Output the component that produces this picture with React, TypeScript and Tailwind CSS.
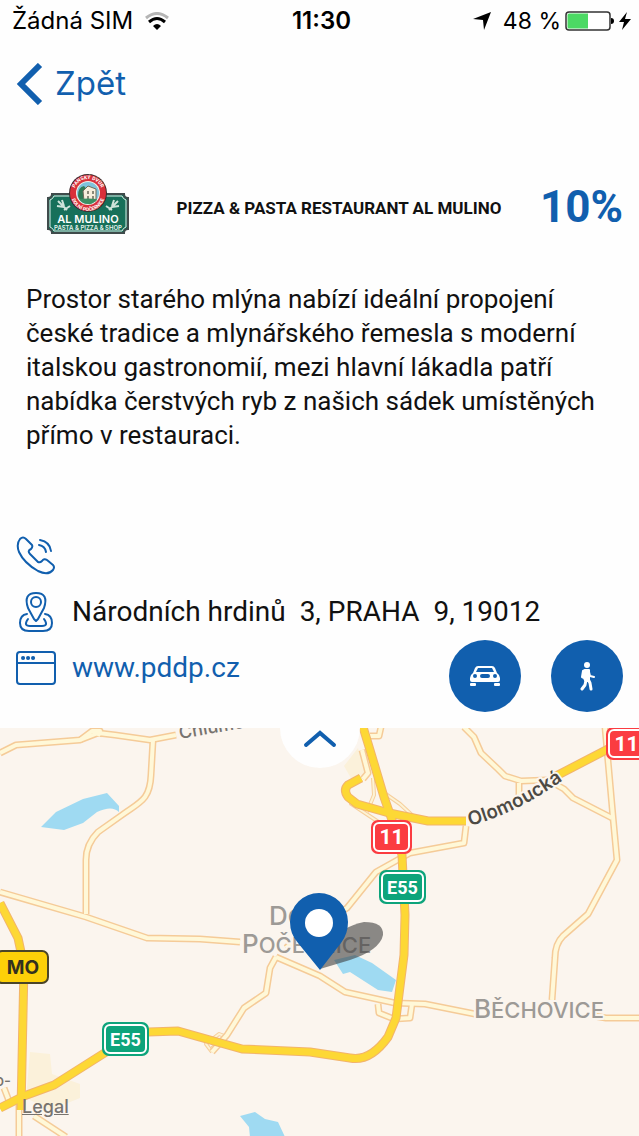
import React, { useState } from 'react';

const roads = {
    minor: [
        "M 0 753 L 16 745 L 80 740 L 98 733 L 115 735 L 150 740 L 176 735",
        "M 80 740 L 92 731 L 100 731 L 98 736",
        "M 153 740 L 151 775 C 150 800 140 802 122 815 L 98 832 Q 86 844 86 860 L 86 914",
        "M 0 892 L 86 917 L 147 938 L 200 939 L 240 942",
        "M 276 957 L 320 976 L 345 992 L 395 1003 L 425 1004 L 475 1014",
        "M 594 1016 L 606 1018 L 640 1018",
        "M 276 957 L 270 968 L 266 993 L 244 1008 L 227 1035 L 212 1052",
        "M 286 948 L 300 936 L 347 908 L 376 872 L 410 853 L 464 843 L 466 826",
        "M 464 727 L 474 737 L 481 753 L 498 769 L 505 776 L 521 781 L 548 780 L 564 789 L 573 798 L 612 818",
        "M 519 783 L 519 798",
        "M 605 727 L 613 817 L 617 860 L 588 914 L 563 936 Q 555 944 555 958 L 552 1000",
        "M 378 1004 L 379 1013 L 394 1019 L 410 1018 L 412 1004",
        "M 362 750 L 368 773 L 363 779",
        "M 381 727 L 379 736 L 370 736",
        "M 19 1100 L 19 1136",
        "M 34 1116 L 66 1137",
        "M 4 1088 L 9 1101",
    ],
    thin: [
        "M 373 778 L 374 795 L 367 812",
        "M 380 790 L 400 804 L 413 816",
        "M 212 1048 L 227 1037 L 219 1034 L 206 1044 L 212 1052",
        "M 350 803 L 380 823",
    ],
    major: [
        "M 363 727 L 370 750 L 384 797 L 392 820 L 402 855 L 405 915 L 404 955 L 396 1018 L 388 1037 Q 370 1062 350 1058 L 310 1052 L 242 1049 L 178 1031 L 148 1032 L 125 1040 L 54 1085 L 24 1096 L 0 1108",
        "M 361 778 L 348 785 Q 343 790 348 797 L 357 804 L 389 813 L 428 821 L 466 821",
        "M 556 776 L 608 749",
        "M 0 903 L 18 938 L 24 966 L 21 1110",
    ],
};

const lakes = [
    "M 41 827 L 56 812 L 83 799 L 107 793 L 119 806 L 119 812 Q 112 805 97 812 L 83 823 L 64 830 Z",
    "M 334 960 L 355 955 L 372 963 L 396 980 L 392 992 L 378 990 L 350 972 L 343 974 Z",
    "M 240 1116 L 255 1112 L 265 1119 L 278 1122 L 285 1137 L 250 1137 L 249 1127 Z",
];

function Shield({ x, y, w, h, color, label, size }: { x: number, y: number, w: number, h: number, color: string, label: string, size: number }) {
    return (
        <g>
            <rect x={x} y={y} width={w} height={h} rx="7" fill={color} />
            <rect x={x + 3} y={y + 3} width={w - 6} height={h - 6} rx="5" fill="none" stroke="#fff" strokeWidth="2" />
            <text x={x + w / 2} y={y + h / 2 + 7} textAnchor="middle" fontSize={size} fontWeight="700" fill="#fff" fontFamily="Roboto, sans-serif">{label}</text>
        </g>
    );
}

function AreaMap() {
    return (
        <svg viewBox="0 728 639 408" className="block w-full" role="img" aria-label="Mapa">
            <rect x="0" y="728" width="639" height="408" fill="#fbf5ee" />
            <path d="M 30 1052 L 50 1054 L 52 1074 L 80 1084 L 80 1098 L 50 1110 L 26 1098 Z M 344 766 L 358 748 L 366 774 L 352 780 Z" fill="#fbf1da" />
            {lakes.map((d) => <path key={d} d={d} fill="#9fdaf2" />)}
            <g fill="none" strokeLinejoin="round">
                {roads.thin.map((d) => <path key={d} d={d} stroke="#f6cf9c" strokeWidth="4" />)}
                {roads.thin.map((d) => <path key={d} d={d} stroke="#fdf3d6" strokeWidth="2" />)}
                {roads.minor.map((d) => <path key={d} d={d} stroke="#f5cb98" strokeWidth="7" />)}
                {roads.minor.map((d) => <path key={d} d={d} stroke="#fff8d8" strokeWidth="4" />)}
                {roads.major.map((d) => <path key={d} d={d} stroke="#f2b46c" strokeWidth="9" />)}
                {roads.major.map((d) => <path key={d} d={d} stroke="#fdd835" strokeWidth="7" />)}
            </g>

            <g fontFamily="Inter, sans-serif" fontWeight="500" paintOrder="stroke" stroke="#fbf5ee" strokeWidth="4" strokeLinejoin="round">
                <text x="269" y="925" fontSize="26" fill="#9d9a96">D<tspan fontSize="22">OLNÍ</tspan></text>
                <text x="242" y="953" fontSize="26" fill="#9d9a96">P<tspan fontSize="22">OČERNICE</tspan></text>
                <text x="474" y="1018" fontSize="26" fill="#9d9a96">B<tspan fontSize="22">ĚCHOVICE</tspan></text>
                <text fontSize="18" fill="#77736e" transform="translate(180 739) rotate(-10)">Chlumecká</text>
                <path id="olomoucka" d="M 470 826 Q 520 812 566 778" fill="none" stroke="none" />
                <text fontSize="19" fontWeight="600" fill="#4d4a44"><textPath href="#olomoucka">Olomoucká</textPath></text>
                <text x="-5" y="1086" fontSize="15" fill="#77736e">o-</text>
            </g>

            <Shield x={371} y={820} w={41} h={34} color="#fb3c41" label="11" size={21} />
            <Shield x={606} y={727} w={41} h={33} color="#fb3c41" label="11" size={21} />
            <Shield x={379} y={870} w={47} h={34} color="#0da47b" label="E55" size={18} />
            <Shield x={102} y={1022} w={47} h={34} color="#0da47b" label="E55" size={18} />
            <rect x="-4" y="951" width="52" height="32" rx="6" fill="#fdd008" stroke="#4b4528" strokeWidth="2" />
            <text x="23" y="974" textAnchor="middle" fontSize="19" fontWeight="700" fill="#33301f" fontFamily="Inter, sans-serif">MO</text>

            <path d="M 320 969 L 330 944 Q 342 926 364 922 Q 384 922 383 935 Q 380 950 350 960 Z" fill="#3f3f3f" fillOpacity="0.6" />
            <path d="M 320 970 L 298 943 Q 290 934 290 922 A 29 29 0 0 1 348 922 Q 348 934 341 943 Z" fill="#115fae" />
            <circle cx="319" cy="923" r="14" fill="#fff" />
        </svg>
    );
}

function Logo() {
    return (
        <svg viewBox="0 0 84 62" className="w-[84px] shrink-0" role="img" aria-label="Al Mulino">
            <path d="M 6 20 H 78 Q 78 24 82 24 V 55 Q 78 55 78 59 H 6 Q 6 55 2 55 V 24 Q 6 24 6 20 Z" fill="#17705a" stroke="#3f4b4b" strokeWidth="2" />
            <path d="M 8 22 H 76 Q 77 25 80 26 V 53 Q 77 54 76 57 H 8 Q 7 54 4 53 V 26 Q 7 25 8 22 Z" fill="none" stroke="#dfece7" strokeWidth="1" />
            <g stroke="#cfe3da" strokeWidth="2" fill="none">
                <path d="M 12 27 L 21 36 M 16 26 L 18 32 M 11 32 L 18 33 M 18 36 L 24 32" />
                <path d="M 72 27 L 63 36 M 68 26 L 66 32 M 73 32 L 66 33 M 66 36 L 60 32" />
            </g>
            <circle cx="42" cy="19" r="19" fill="#3d2a2c" />
            <circle cx="42" cy="19" r="18" fill="#d9303a" />
            <circle cx="42" cy="19" r="12" fill="#f4efe5" />
            <circle cx="42" cy="19" r="11" fill="#7fc3dc" />
            <path d="M 32 22 Q 32 13 38 12 L 42 17 L 40 29 Q 33 27 32 22 Z" fill="#2f7a54" />
            <path d="M 37 17 L 42 12 L 50 15 L 50 27 L 38 27 Z" fill="#f6efdc" stroke="#6f6a58" strokeWidth="1" />
            <path d="M 41 17 h 2 v 3 h -2 Z M 46 17 h 2 v 3 h -2 Z M 41 22 h 2 v 3 h -2 Z M 46 22 h 2 v 3 h -2 Z" fill="#8b8a78" />
            <path d="M 33 25 Q 42 24 51 25 Q 47 31 42 30 Q 36 30 33 25 Z" fill="#3c8f63" />
            <path id="ring-top" d="M 28 19 A 14 14 0 0 1 56 19" fill="none" />
            <path id="ring-bottom" d="M 25 20 A 17 17 0 0 0 59 20" fill="none" />
            <g fill="#fff" fontFamily="Roboto, sans-serif" fontWeight="700" fontSize="5" textAnchor="middle">
                <text><textPath href="#ring-top" startOffset="50%">PANSKÝ DVŮR</textPath></text>
                <text><textPath href="#ring-bottom" startOffset="50%">DOLNÍ POČERNICE</textPath></text>
            </g>
            <text x="42" y="49" textAnchor="middle" fontFamily="Inter, sans-serif" fontWeight="600" fontSize="11" fill="#fff">AL MULINO</text>
            <text x="42" y="56" textAnchor="middle" fontFamily="Inter, sans-serif" fontWeight="600" fontSize="6" fill="#e4f0eb">PASTA &amp; PIZZA &amp; SHOP</text>
        </svg>
    );
}

function StatusBar() {
    return (
        <header className="grid grid-cols-[1fr_auto_1fr] items-center h-[42px] pl-3 pr-2 font-[Inter,sans-serif] text-[24px] text-black">
            <div className="flex items-center gap-3">
                <span>Žádná SIM</span>
                <svg viewBox="0 0 24 18" className="w-6" fill="none" strokeWidth="3">
                    <path d="M 1 6 Q 12 -3 23 6" stroke="#b5b5b5" />
                    <path d="M 4 10 Q 12 3 20 10" stroke="#000" />
                    <path d="M 8 14 Q 12 10 16 14 L 12 18 Z" fill="#000" />
                </svg>
            </div>
            <time className="font-semibold">11:30</time>
            <div className="flex items-center justify-end">
                <svg viewBox="0 0 18 18" className="w-[18px] mr-3"><path d="M 18 0 L 11 18 L 10 8 L 0 7 Z" /></svg>
                <span className="mr-1 text-[23px]">48 %</span>
                <svg viewBox="0 0 50 20" className="w-[50px] mr-1">
                    <rect x="1" y="1" width="44" height="18" rx="3" fill="#fff" stroke="#333" strokeWidth="1.500" />
                    <path d="M 4 2.500 H 23 V 17.500 H 4 Q 2.500 17.500 2.500 16 V 4 Q 2.500 2.500 4 2.500 Z" fill="#4cd964" />
                    <path d="M 46 7 Q 49 7 49 10 Q 49 13 46 13 Z" />
                </svg>
                <svg viewBox="0 0 12 18" className="w-3"><path d="M 8 0 L 0 10 L 5 10 L 3 18 L 12 7 L 6 7 Z" /></svg>
            </div>
        </header>
    );
}

export default function App() {
    const [ open, setOpen ] = useState<boolean>(true);

    return (
        <div className="min-h-screen bg-[#fefefe] font-[Roboto,sans-serif] text-[#111]">
            <StatusBar />
            <nav className="px-4 pt-[18px] h-[86px]">
                <button className="flex items-center gap-3 h-12 font-[Inter,sans-serif] text-[33px] text-[#115fae]">
                    <svg viewBox="0 0 27 42" className="w-[27px]"><path d="M 24 2 L 5 21 L 24 40" fill="none" stroke="currentColor" strokeWidth="6" /></svg>
                    Zpět
                </button>
            </nav>

            <main>
                <section className="flex items-center pl-[46px] pr-4 h-[154px]">
                    <Logo />
                    <h1 className="flex-1 pt-2 pl-2 text-center text-[17px] font-bold">PIZZA &amp; PASTA RESTAURANT AL MULINO</h1>
                    <strong className="pt-1 text-[44px] font-bold text-[#115fae]">10%</strong>
                </section>

                <p className="px-[26px] h-[246px] text-[26px] leading-[34px]">
                    Prostor starého mlýna nabízí ideální propojení české tradice a mlynářského řemesla s moderní italskou gastronomií, mezi hlavní lákadla patří nabídka čerstvých ryb z našich sádek umístěných přímo v restauraci.
                </p>

                <address className="px-4 pb-4 not-italic text-[28px]">
                    <div className="flex items-center h-14">
                        <button aria-label="Zavolat" className="text-[#115fae]">
                            <svg viewBox="0 0 40 40" className="w-10" fill="none" stroke="currentColor" strokeWidth="2" strokeLinecap="round" strokeLinejoin="round">
                                <path d="M 4 3 Q 7 0 10 3 L 16 9 Q 17 11 15 13 Q 11 15 14 18 L 22 26 Q 24 27 26 25 Q 28 22 31 24 L 37 29 Q 39 31 37 34 Q 32 40 22 35 Q 8 27 3 16 Q 0 8 4 3 Z" />
                                <path d="M 24 4 Q 34 6 35 15 M 23 9 Q 29 10 30 16" />
                            </svg>
                        </button>
                    </div>
                    <div className="flex items-center gap-4 h-14">
                        <svg viewBox="0 0 40 40" className="w-10 shrink-0 text-[#115fae]" fill="none" stroke="currentColor" strokeWidth="2" strokeLinecap="round">
                            <path d="M 20 29 Q 19 28 18 27 L 12 16 Q 7 1 20 1 Q 33 1 28 16 L 22 27 Q 21 28 20 29 Z" strokeLinejoin="round" />
                            <circle cx="20" cy="10" r="5" />
                            <path d="M 11 22 Q 4 23 4 31 Q 4 39 13 39 H 27 Q 36 39 36 31 Q 36 23 29 22" />
                            <path d="M 12 27 Q 7 34 14 34 H 26 Q 33 34 28 27" />
                        </svg>
                        <span className="whitespace-pre">Národních hrdinů  3, PRAHA  9, 19012</span>
                    </div>
                    <div className="flex items-start justify-between">
                        <a href="http://www.pddp.cz" className="flex items-center gap-4 h-14 text-[#115fae]">
                            <svg viewBox="0 0 40 34" className="w-10" fill="none" stroke="currentColor" strokeWidth="2">
                                <rect x="1" y="1" width="38" height="32" rx="3" />
                                <path d="M 1 12 H 39" />
                                <path d="M 7 7 h .1 M 12 7 h .1 M 17 7 h .1" strokeWidth="4" strokeLinecap="round" />
                            </svg>
                            www.pddp.cz
                        </a>
                        <div className="flex gap-[30px]">
                            <button aria-label="Autem" className="grid place-items-center size-[72px] rounded-full bg-[#115fae]">
                                <svg viewBox="0 0 32 22" className="w-8" fill="#fff">
                                    <path fillRule="evenodd" d="M 9 1 H 23 Q 25 1 26 3 L 28 8 Q 31 10 31 13 V 15 Q 31 17 29 17 H 3 Q 1 17 1 15 V 13 Q 1 10 4 8 L 6 3 Q 7 1 9 1 Z M 9 3 L 7 7 H 25 L 23 3 Z M 6 9 A 2 2 0 0 0 6 13 A 2 2 0 0 0 6 9 Z M 26 9 A 2 2 0 0 0 26 13 A 2 2 0 0 0 26 9 Z M 13 9 Q 11 9 11 11 Q 11 13 13 13 H 19 Q 21 13 21 11 Q 21 9 19 9 Z" />
                                    <rect x="1" y="18" width="6" height="3" rx="1" />
                                    <rect x="25" y="18" width="6" height="3" rx="1" />
                                </svg>
                            </button>
                            <button aria-label="Pěšky" className="grid place-items-center size-[72px] rounded-full bg-[#115fae]">
                                <svg viewBox="0 0 16 30" className="w-4" fill="#fff" stroke="#fff" strokeLinecap="round" strokeLinejoin="round">
                                    <circle cx="8" cy="4" r="3" stroke="none" />
                                    <path d="M 4 10 L 6 9 H 10 V 19 H 6 L 5 17 L 3 16 Z" strokeWidth="2" />
                                    <path d="M 10 11 L 11 15 L 15 16" fill="none" strokeWidth="2" />
                                    <path d="M 7 19 L 6 24 L 3 28 M 9 18 L 11 22 L 12 28" fill="none" strokeWidth="3" />
                                </svg>
                            </button>
                        </div>
                    </div>
                </address>

                <section className="relative overflow-hidden">
                    <AreaMap />
                    <button
                        aria-label="Zvětšit mapu"
                        aria-expanded={!open}
                        onClick={() => setOpen(!open)}
                        className="absolute -top-10 left-1/2 -translate-x-1/2 flex items-end justify-center pb-5 size-20 rounded-full bg-[#fefefe] text-[#115fae]"
                    >
                        <svg viewBox="0 0 34 18" className="w-[34px]"><path d="M 3 15 L 17 3 L 31 15" fill="none" stroke="currentColor" strokeWidth="4" strokeLinecap="round" /></svg>
                    </button>
                    <a href="#legal" className="absolute bottom-4 left-[22px] font-[Inter,sans-serif] text-[18px] font-medium text-[#77736e] underline">Legal</a>
                </section>
            </main>
        </div>
    );
}
